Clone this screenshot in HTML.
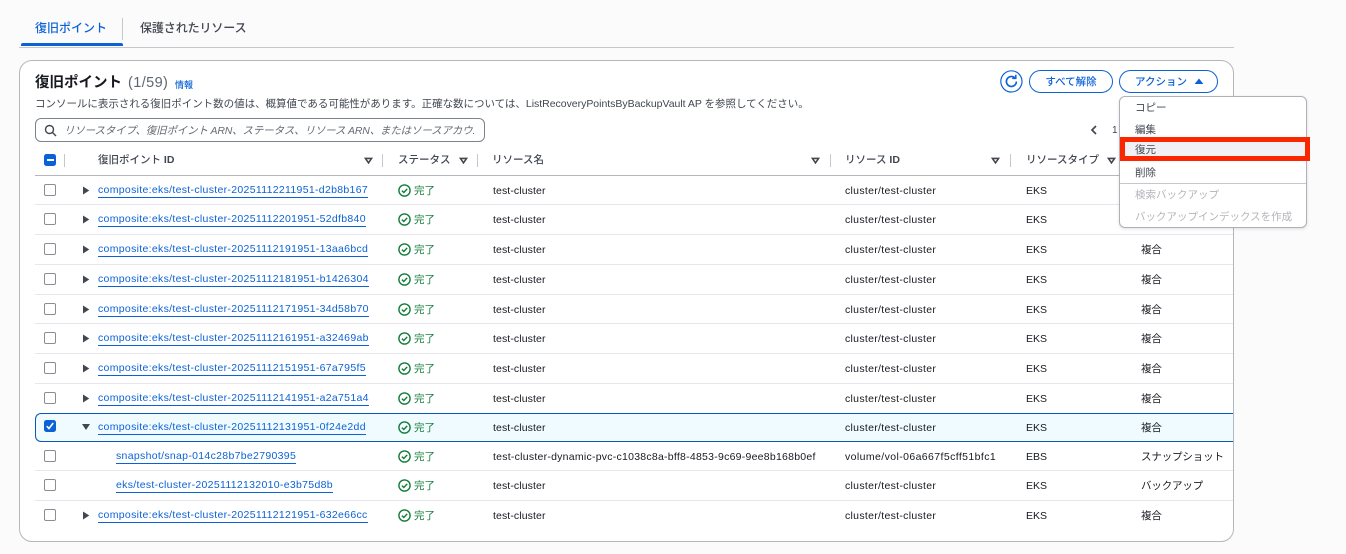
<!DOCTYPE html>
<html lang="ja"><head><meta charset="utf-8"><style>
html,body{margin:0;padding:0;width:1346px;height:554px;overflow:hidden;background:#fbfbfb}
body{position:relative;font-family:"Liberation Sans","Noto Sans CJK JP",sans-serif;font-size:10.5px;color:#16191f}
div,span,a,svg{position:absolute;white-space:nowrap}
b{font-weight:700}
.card{left:19px;top:60px;width:1215px;height:482px;box-sizing:border-box;background:#fff;border:1px solid #b6b6bd;border-radius:13px}
.sep{height:1px;left:35px;width:1198px;background:#e6e6ec}
.r{left:0;width:1233px;height:22px;line-height:22px;letter-spacing:.3px}
.cb{left:44px;top:4px;width:12px;height:12px;box-sizing:border-box;border:1px solid #8c8c94;border-radius:2px;background:#fff}
.tri{left:82px;top:6px}
.l{left:98px;top:4px;height:13px;line-height:12px;color:#0b62d6;border-bottom:1px solid #0b62d6;font-size:10.5px;letter-spacing:.31px}
.l.sub{left:116px}
.ok{left:397.5px;top:4px}
.st{left:414px;color:#1b8040;letter-spacing:0}
.n{left:493px;letter-spacing:.1px}.i{left:845px}.t{left:1026px;letter-spacing:0}.k{left:1141px;letter-spacing:-.15px}
.h{top:150px;height:20px;line-height:20px;color:#414750;font-weight:500;font-size:10.5px}
.v{width:1px;background:#c6c6cd;top:154px;height:13px}
.s{top:157px}
.b{border:1.2px solid #0b62d6;border-radius:12px;box-sizing:border-box;color:#0b62d6;font-weight:500;text-align:center;height:23px;line-height:23px;top:70px;background:#fff;font-size:10.5px}
.m{left:1135px;height:18px;line-height:20px;color:#414750;font-size:10.5px}
.m.d{color:#b4b4bb}
</style></head><body>

<div style="left:35px;top:19px;line-height:19px;font-size:12px;font-weight:500;color:#0b62d6">復旧ポイント</div>
<div style="left:140px;top:19px;line-height:19px;font-size:12px;font-weight:500;letter-spacing:-.1px;color:#424650">保護されたリソース</div>
<div style="left:122px;top:18px;width:1px;height:22px;background:#c6c6cd"></div>
<div style="left:19px;top:47px;width:1215px;height:1px;background:#c6c6cd"></div>
<div style="left:21px;top:43px;width:102px;height:3px;background:#0b62d6;border-radius:2px 2px 0 0"></div>

<div class="card"></div>
<div style="left:35px;top:73px;line-height:20px;font-size:14.5px;font-weight:bold;color:#16191f">復旧ポイント</div>
<div style="left:128px;top:73px;line-height:20px;font-size:14.5px;letter-spacing:.4px;color:#5f6670">(1/59)</div>
<div style="left:175px;top:78px;line-height:14px;font-size:9px;font-weight:500;color:#0b62d6">情報</div>
<div style="left:35px;top:96px;line-height:16px;font-size:10.5px;letter-spacing:-.02px;color:#414750">コンソールに表示される復旧ポイント数の値は、概算値である可能性があります。正確な数については、ListRecoveryPointsByBackupVault AP を参照してください。</div>

<div style="left:35px;top:118px;width:450px;height:24px;box-sizing:border-box;border:1px solid #7d838c;border-radius:6px;background:#fff"></div>
<svg style="left:44px;top:124px" width="13" height="13" viewBox="0 0 13 13" fill="none" stroke="#414750" stroke-width="1.4"><circle cx="5.5" cy="5.5" r="4"/><path d="M8.5 8.5L12 12"/></svg>
<div style="left:64px;top:122px;line-height:18px;font-size:10.5px;font-style:italic;letter-spacing:-.17px;color:#656b75">リソースタイプ、復旧ポイント ARN、ステータス、リソース ARN、またはソースアカウ.</div>

<svg style="left:1090px;top:125px" width="8" height="10" viewBox="0 0 8 10" fill="none" stroke="#414750" stroke-width="1.7"><path d="M6 1L2 5l4 4"/></svg>
<div style="left:1112px;top:122px;line-height:18px;font-size:10px;color:#414750">1</div>

<svg style="left:1000px;top:70px" width="23" height="23" viewBox="0 0 23 23" fill="none" stroke="#0b62d6" stroke-width="1.2"><circle cx="11.4" cy="11.4" r="10.6"/><path stroke-width="1.7" d="M16.4 11.5a5 5 0 1 1-1.6-3.7"/><path stroke-width="1.5" d="M15.8 4.8v3.6h-3.6"/></svg>
<div class="b" style="left:1029px;width:84px">すべて解除</div>
<div class="b" style="left:1119px;width:99px;text-align:left;padding-left:15px">アクション</div>
<svg style="left:1194px;top:78px" width="10" height="7" viewBox="0 0 10 7"><path fill="#0b62d6" d="M5 .5L9.4 6H.6z"/></svg>

<div class="sep" style="top:175px;background:#b6b6bd"></div>
<div class="cb" style="left:44px;top:154px;width:12px;height:12px;background:#0b62d6;border:0;border-radius:2.5px"></div>
<div style="left:46.5px;top:159px;width:7px;height:2px;background:#fff"></div>
<div class="v" style="left:64px"></div>
<div class="h" style="left:98px">復旧ポイント <b>ID</b></div>
<svg class="s" style="left:364px" width="9" height="8" viewBox="0 0 9 8"><path fill="none" stroke="#414750" stroke-width="1.6" d="M1.4 1.4h6.2L4.5 5.8z"/></svg>
<div class="v" style="left:382px"></div>
<div class="h" style="left:398px">ステータス</div>
<svg class="s" style="left:459px" width="9" height="8" viewBox="0 0 9 8"><path fill="none" stroke="#414750" stroke-width="1.6" d="M1.4 1.4h6.2L4.5 5.8z"/></svg>
<div class="v" style="left:477px"></div>
<div class="h" style="left:492px">リソース名</div>
<svg class="s" style="left:811px" width="9" height="8" viewBox="0 0 9 8"><path fill="none" stroke="#414750" stroke-width="1.6" d="M1.4 1.4h6.2L4.5 5.8z"/></svg>
<div class="v" style="left:830px"></div>
<div class="h" style="left:845px">リソース <b>ID</b></div>
<svg class="s" style="left:991px" width="9" height="8" viewBox="0 0 9 8"><path fill="none" stroke="#414750" stroke-width="1.6" d="M1.4 1.4h6.2L4.5 5.8z"/></svg>
<div class="v" style="left:1010px"></div>
<div class="h" style="left:1026px">リソースタイプ</div>
<svg class="s" style="left:1107px" width="9" height="8" viewBox="0 0 9 8"><path fill="none" stroke="#414750" stroke-width="1.6" d="M1.4 1.4h6.2L4.5 5.8z"/></svg>

<div class="sep" style="top:204px"></div>
<div class="sep" style="top:234px"></div>
<div class="sep" style="top:264px"></div>
<div class="sep" style="top:294px"></div>
<div class="sep" style="top:323px"></div>
<div class="sep" style="top:353px"></div>
<div class="sep" style="top:383px"></div>
<div class="sep" style="top:470px"></div>
<div class="sep" style="top:500px"></div>
<div style="left:35px;top:413px;width:1198px;height:29px;box-sizing:border-box;background:#f0fbff;border:1px solid #0a57b8;border-right:0;border-radius:6px 0 0 6px"></div>

<div class="r" style="top:180px"><div class="cb"></div><svg class="tri" width="8" height="9" viewBox="0 0 8 9"><path fill="#414750" d="M1 .5L7.3 4.5 1 8.5z"/></svg><a class="l">composite:eks/test-cluster-20251112211951-d2b8b167</a><svg class="ok" width="13" height="13" viewBox="0 0 13 13" fill="none" stroke="#137d3a" stroke-width="1.4"><circle cx="6.5" cy="6.5" r="5.6"/><path d="M3.9 6.6l1.9 1.9 3.4-3.6"/></svg><span class="st">完了</span><span class="n">test-cluster</span><span class="i">cluster/test-cluster</span><span class="t">EKS</span></div>
<div class="r" style="top:209px"><div class="cb"></div><svg class="tri" width="8" height="9" viewBox="0 0 8 9"><path fill="#414750" d="M1 .5L7.3 4.5 1 8.5z"/></svg><a class="l">composite:eks/test-cluster-20251112201951-52dfb840</a><svg class="ok" width="13" height="13" viewBox="0 0 13 13" fill="none" stroke="#137d3a" stroke-width="1.4"><circle cx="6.5" cy="6.5" r="5.6"/><path d="M3.9 6.6l1.9 1.9 3.4-3.6"/></svg><span class="st">完了</span><span class="n">test-cluster</span><span class="i">cluster/test-cluster</span><span class="t">EKS</span></div>
<div class="r" style="top:239px"><div class="cb"></div><svg class="tri" width="8" height="9" viewBox="0 0 8 9"><path fill="#414750" d="M1 .5L7.3 4.5 1 8.5z"/></svg><a class="l">composite:eks/test-cluster-20251112191951-13aa6bcd</a><svg class="ok" width="13" height="13" viewBox="0 0 13 13" fill="none" stroke="#137d3a" stroke-width="1.4"><circle cx="6.5" cy="6.5" r="5.6"/><path d="M3.9 6.6l1.9 1.9 3.4-3.6"/></svg><span class="st">完了</span><span class="n">test-cluster</span><span class="i">cluster/test-cluster</span><span class="t">EKS</span><span class="k">複合</span></div>
<div class="r" style="top:269px"><div class="cb"></div><svg class="tri" width="8" height="9" viewBox="0 0 8 9"><path fill="#414750" d="M1 .5L7.3 4.5 1 8.5z"/></svg><a class="l">composite:eks/test-cluster-20251112181951-b1426304</a><svg class="ok" width="13" height="13" viewBox="0 0 13 13" fill="none" stroke="#137d3a" stroke-width="1.4"><circle cx="6.5" cy="6.5" r="5.6"/><path d="M3.9 6.6l1.9 1.9 3.4-3.6"/></svg><span class="st">完了</span><span class="n">test-cluster</span><span class="i">cluster/test-cluster</span><span class="t">EKS</span><span class="k">複合</span></div>
<div class="r" style="top:299px"><div class="cb"></div><svg class="tri" width="8" height="9" viewBox="0 0 8 9"><path fill="#414750" d="M1 .5L7.3 4.5 1 8.5z"/></svg><a class="l">composite:eks/test-cluster-20251112171951-34d58b70</a><svg class="ok" width="13" height="13" viewBox="0 0 13 13" fill="none" stroke="#137d3a" stroke-width="1.4"><circle cx="6.5" cy="6.5" r="5.6"/><path d="M3.9 6.6l1.9 1.9 3.4-3.6"/></svg><span class="st">完了</span><span class="n">test-cluster</span><span class="i">cluster/test-cluster</span><span class="t">EKS</span><span class="k">複合</span></div>
<div class="r" style="top:328px"><div class="cb"></div><svg class="tri" width="8" height="9" viewBox="0 0 8 9"><path fill="#414750" d="M1 .5L7.3 4.5 1 8.5z"/></svg><a class="l">composite:eks/test-cluster-20251112161951-a32469ab</a><svg class="ok" width="13" height="13" viewBox="0 0 13 13" fill="none" stroke="#137d3a" stroke-width="1.4"><circle cx="6.5" cy="6.5" r="5.6"/><path d="M3.9 6.6l1.9 1.9 3.4-3.6"/></svg><span class="st">完了</span><span class="n">test-cluster</span><span class="i">cluster/test-cluster</span><span class="t">EKS</span><span class="k">複合</span></div>
<div class="r" style="top:358px"><div class="cb"></div><svg class="tri" width="8" height="9" viewBox="0 0 8 9"><path fill="#414750" d="M1 .5L7.3 4.5 1 8.5z"/></svg><a class="l">composite:eks/test-cluster-20251112151951-67a795f5</a><svg class="ok" width="13" height="13" viewBox="0 0 13 13" fill="none" stroke="#137d3a" stroke-width="1.4"><circle cx="6.5" cy="6.5" r="5.6"/><path d="M3.9 6.6l1.9 1.9 3.4-3.6"/></svg><span class="st">完了</span><span class="n">test-cluster</span><span class="i">cluster/test-cluster</span><span class="t">EKS</span><span class="k">複合</span></div>
<div class="r" style="top:388px"><div class="cb"></div><svg class="tri" width="8" height="9" viewBox="0 0 8 9"><path fill="#414750" d="M1 .5L7.3 4.5 1 8.5z"/></svg><a class="l">composite:eks/test-cluster-20251112141951-a2a751a4</a><svg class="ok" width="13" height="13" viewBox="0 0 13 13" fill="none" stroke="#137d3a" stroke-width="1.4"><circle cx="6.5" cy="6.5" r="5.6"/><path d="M3.9 6.6l1.9 1.9 3.4-3.6"/></svg><span class="st">完了</span><span class="n">test-cluster</span><span class="i">cluster/test-cluster</span><span class="t">EKS</span><span class="k">複合</span></div>
<div class="r" style="top:417px"><div class="cb" style="left:44px;top:3px;width:12px;height:12px;background:#0b62d6;border:0;border-radius:2.5px"></div><svg style="left:46px;top:5px" width="8" height="8" viewBox="0 0 8 8" fill="none" stroke="#fff" stroke-width="1.6"><path d="M.8 4.2l2.2 2.3L7.2 1"/></svg><svg class="tri" style="left:81px;top:6px" width="10" height="8" viewBox="0 0 10 8"><path fill="#414750" d="M1 1h8L5 7z"/></svg><a class="l">composite:eks/test-cluster-20251112131951-0f24e2dd</a><svg class="ok" width="13" height="13" viewBox="0 0 13 13" fill="none" stroke="#137d3a" stroke-width="1.4"><circle cx="6.5" cy="6.5" r="5.6"/><path d="M3.9 6.6l1.9 1.9 3.4-3.6"/></svg><span class="st">完了</span><span class="n">test-cluster</span><span class="i">cluster/test-cluster</span><span class="t">EKS</span><span class="k">複合</span></div>
<div class="r" style="top:446px"><div class="cb"></div><a class="l sub">snapshot/snap-014c28b7be2790395</a><svg class="ok" width="13" height="13" viewBox="0 0 13 13" fill="none" stroke="#137d3a" stroke-width="1.4"><circle cx="6.5" cy="6.5" r="5.6"/><path d="M3.9 6.6l1.9 1.9 3.4-3.6"/></svg><span class="st">完了</span><span class="n" style="letter-spacing:.25px">test-cluster-dynamic-pvc-c1038c8a-bff8-4853-9c69-9ee8b168b0ef</span><span class="i" style="letter-spacing:.4px">volume/vol-06a667f5cff51bfc1</span><span class="t">EBS</span><span class="k">スナップショット</span></div>
<div class="r" style="top:475px"><div class="cb"></div><a class="l sub">eks/test-cluster-20251112132010-e3b75d8b</a><svg class="ok" width="13" height="13" viewBox="0 0 13 13" fill="none" stroke="#137d3a" stroke-width="1.4"><circle cx="6.5" cy="6.5" r="5.6"/><path d="M3.9 6.6l1.9 1.9 3.4-3.6"/></svg><span class="st">完了</span><span class="n">test-cluster</span><span class="i">cluster/test-cluster</span><span class="t">EKS</span><span class="k">バックアップ</span></div>
<div class="r" style="top:505px"><div class="cb"></div><svg class="tri" width="8" height="9" viewBox="0 0 8 9"><path fill="#414750" d="M1 .5L7.3 4.5 1 8.5z"/></svg><a class="l">composite:eks/test-cluster-20251112121951-632e66cc</a><svg class="ok" width="13" height="13" viewBox="0 0 13 13" fill="none" stroke="#137d3a" stroke-width="1.4"><circle cx="6.5" cy="6.5" r="5.6"/><path d="M3.9 6.6l1.9 1.9 3.4-3.6"/></svg><span class="st">完了</span><span class="n">test-cluster</span><span class="i">cluster/test-cluster</span><span class="t">EKS</span><span class="k">複合</span></div>

<div style="left:1119px;top:96px;width:188px;height:132px;box-sizing:border-box;background:#fff;border:1px solid #b0b0b8;border-radius:6px;box-shadow:0 1px 3px rgba(0,7,22,.12)"></div>
<div class="m" style="top:98px">コピー</div>
<div class="m" style="top:120px">編集</div>
<div style="left:1120px;top:137px;width:190px;height:24px;box-sizing:border-box;border:5px solid #fa2600;background:#f0f0f5"></div>
<div class="m" style="top:140px">復元</div>
<div class="m" style="top:163px">削除</div>
<div style="left:1120px;top:183px;width:186px;height:1px;background:#c6c6cd"></div>
<div class="m d" style="top:185px">検索バックアップ</div>
<div class="m d" style="top:207px">バックアップインデックスを作成</div>

</body></html>
